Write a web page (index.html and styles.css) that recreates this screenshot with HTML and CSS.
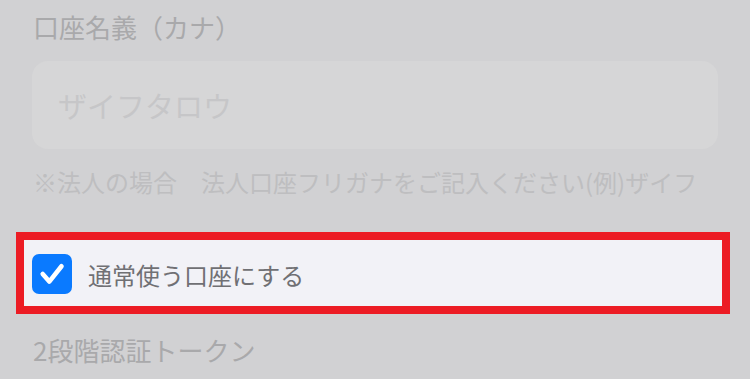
FILE: index.html
```html
<!DOCTYPE html>
<html lang="ja">
<head>
<meta charset="utf-8">
<link rel="stylesheet" href="styles.css">
</head>
<body>
<div class="page">
  <div class="label">口座名義（カナ）</div>
  <div class="input"><span class="placeholder">ザイフタロウ</span></div>
  <div class="hint">※法人の場合　法人口座フリガナをご記入ください(例)ザイフ</div>
  <div class="highlight">
    <div class="check-row">
      <span class="checkbox">
        <svg viewBox="0 0 40 40" width="40" height="40"><path d="M10.7 20 L17.3 27.6 L29.5 12.2" fill="none" stroke="#fff" stroke-width="4.6" stroke-linecap="round" stroke-linejoin="round"/></svg>
      </span>
      <span class="check-text">通常使う口座にする</span>
    </div>
  </div>
  <div class="label label-bottom">2段階認証トークン</div>
</div>
</body>
</html>
```
FILE: styles.css
```css
html, body {
  margin: 0;
  padding: 0;
  background: #d1d1d3;
}
body {
  font-family: "Noto Sans CJK JP", "Noto Sans", sans-serif;
  width: 750px;
  height: 379px;
  overflow: hidden;
}
.page {
  padding-top: 11px;
}
.label {
  font-size: 26px;
  line-height: 32px;
  color: #a9a9ab;
  padding-left: 33px;
  height: 32px;
  white-space: nowrap;
}
.input {
  margin: 18px 32px 0 32px;
  height: 88px;
  border-radius: 16px;
  background: #d6d6d7;
  display: flex;
  align-items: center;
  padding-left: 26px;
}
.placeholder {
  font-size: 29px;
  line-height: 36px;
  color: #c6c6c8;
}
.hint {
  margin-top: 17px;
  padding-left: 33px;
  font-size: 24px;
  line-height: 32px;
  color: #bebec0;
  white-space: nowrap;
}
.highlight {
  margin: 34px 0 0 16px;
  width: 714px;
  height: 82px;
  box-sizing: border-box;
  border: 8px solid #ec1c24;
  background: #f2f2f7;
  display: flex;
  align-items: center;
  padding-left: 8px;
}
.check-row {
  display: flex;
  align-items: center;
  gap: 16px;
}
.checkbox {
  width: 40px;
  height: 40px;
  border-radius: 7px;
  background: #0a7aff;
  display: block;
  margin-top: 1px;
}
.checkbox svg {
  display: block;
}
.check-text {
  font-size: 24px;
  line-height: 32px;
  color: #707074;
  margin-top: 4px;
}
.label-bottom {
  margin-top: 20px;
}
```
